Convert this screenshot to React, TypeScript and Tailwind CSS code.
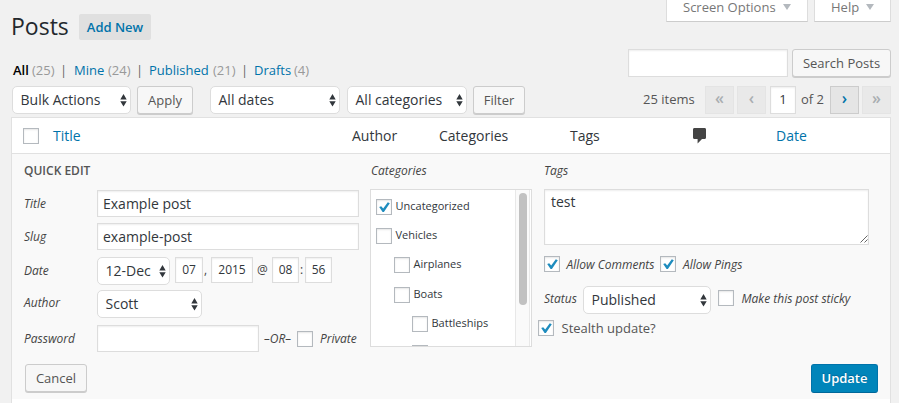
import type { ReactNode } from "react";
import { clsx } from "clsx";

function Arrows({ className }: { className?: string }) {
  return (
    <svg className={clsx("shrink-0", className)} width="7" height="13" viewBox="0 0 7 13" fill="#32373c">
      <path d="M3.5 0 6.700 5.400H.3zM3.500 12.600.3 7.200h6.400z" />
    </svg>
  );
}

function Select({ children, className }: { children: ReactNode; className?: string }) {
  return (
    <div className={clsx("flex h-7 shrink-0 items-center justify-between rounded-[5px] border border-[#ddd] bg-white pr-[3px] pl-[7.5px] text-sm text-[#32373c]", className)}>
      <span className="whitespace-nowrap">{children}</span>
      <Arrows />
    </div>
  );
}

function Button({ children, className }: { children: ReactNode; className?: string }) {
  return (
    <button className={clsx("flex h-7 shrink-0 items-center justify-center rounded-[3px] border border-[#ccc] bg-[#f7f7f7] pt-px text-[13px] whitespace-nowrap text-[#555] shadow-[0_1px_0_#ccc]", className)}>
      {children}
    </button>
  );
}

function Check({ on, className }: { on?: boolean; className?: string }) {
  return (
    <span className={clsx("flex size-4 shrink-0 items-center justify-center border border-[#b4b9be] bg-white shadow-[inset_0_1px_2px_rgba(0,0,0,0.1)]", className)}>
      {on && (
        <svg width="14" height="14" viewBox="0 0 14 14" fill="#1e8cbe" className="shrink-0">
          <path d="M2.2 7.1 4.200 6.200 6.200 8.600 10.800 2.300 12.800 3.300 6.900 11.900 5.600 11.900z" />
        </svg>
      )}
    </span>
  );
}

function Field({ children, className }: { children?: ReactNode; className?: string }) {
  return (
    <div className={clsx("flex shrink-0 items-center border border-[#ddd] bg-white text-[#32373c] shadow-[inset_0_1px_2px_rgba(0,0,0,0.07)]", className)}>
      {children}
    </div>
  );
}

function Label({ children, className }: { children: ReactNode; className?: string }) {
  return <span className={clsx("shrink-0 text-xs whitespace-nowrap text-[#444] italic", className)}>{children}</span>;
}

function ScreenTab({ label, className, labelClass }: { label: string; className: string; labelClass: string }) {
  return (
    <div className={clsx("flex h-[22px] items-start border border-t-0 border-[#ddd] border-b-[#ccc] bg-white pl-4 text-[13px] text-[#777]", className)}>
      <span className={clsx("-mt-[2px] shrink-0 leading-[18px] whitespace-nowrap", labelClass)}>{label}</span>
      <svg className="mt-1 shrink-0" width="8" height="6" viewBox="0 0 8 6" fill="#b4b9be"><path d="M0 0h8L4 6z" /></svg>
    </div>
  );
}

function View({ label, count, labelClass, countClass, barClass }: { label: string; count: string; labelClass: string; countClass: string; barClass?: string }) {
  return (
    <>
      <span className={clsx("shrink-0", labelClass)}>{label}</span>
      <span className={clsx("shrink-0 text-[#999]", countClass)}>{count}</span>
      {barClass && <span className={clsx("shrink-0 text-[#666]", barClass)}>|</span>}
    </>
  );
}

function PageButton({ children, active, className }: { children: ReactNode; active?: boolean; className?: string }) {
  return (
    <span className={clsx("flex h-7 w-[29px] shrink-0 items-center justify-center border pb-[4px] text-base font-semibold", active ? "border-[#ccc] bg-[#e5e5e5] text-[#0073aa]" : "border-[#e4e4e4] bg-[#e9e9e9] text-[#a9aeb1]", className)}>
      {children}
    </span>
  );
}

const categories = [
  { name: "Uncategorized", checked: true, row: "mt-[9px] ml-[5px]" },
  { name: "Vehicles", row: "mt-[13px] ml-[5px]" },
  { name: "Airplanes", row: "mt-[13px] ml-[23px]" },
  { name: "Boats", row: "mt-[14px] ml-[23px]" },
  { name: "Battleships", row: "mt-[13px] ml-[41px]" },
  { name: "", row: "mt-[13px] ml-[41px]" },
];

export default function App() {
  return (
    <div className="h-[403px] w-[899px] overflow-hidden bg-[#f1f1f1] font-['Open_Sans','Noto_Sans',sans-serif] text-[13px] text-[#444]">
      <header className="flex h-[49px] items-start pl-[11px]">
        <h1 className="mt-[11px] w-[68px] text-[23px] leading-[31px] text-[#23282d]">Posts</h1>
        <a className="mt-[14px] flex h-[26px] w-[72px] items-center justify-center rounded-[2px] bg-[#e0e0e0] pt-px text-[13px] font-semibold text-[#0073aa]">Add New</a>
        <ScreenTab label="Screen Options" className="ml-[515px] w-[142px]" labelClass="w-[100px]" />
        <ScreenTab label="Help" className="ml-[6px] w-[77px]" labelClass="w-[35px]" />
      </header>

      <div className="flex h-[37px] items-start pl-[13px]">
        <nav className="mt-[11px] flex w-[615px] leading-5 whitespace-nowrap text-[#0073aa]">
          <View label="All" count="(25)" labelClass="w-[19px] font-semibold text-black" countClass="w-[28px]" barClass="w-[14px]" />
          <View label="Mine" count="(24)" labelClass="w-[34px]" countClass="w-[28px]" barClass="w-[13px]" />
          <View label="Published" count="(21)" labelClass="w-[64px]" countClass="w-[28px]" barClass="w-[13px]" />
          <View label="Drafts" count="(4)" labelClass="w-[40px]" countClass="w-[20px]" />
        </nav>
        <Field className="h-7 w-[160px]" />
        <Button className="ml-1 w-[99px]">Search Posts</Button>
      </div>

      <div className="flex h-[31px] items-start pl-3">
        <Select className="w-[119px]">Bulk Actions</Select>
        <Button className="ml-[6px] w-[56px]">Apply</Button>
        <Select className="ml-[17px] w-[130px]">All dates</Select>
        <Select className="ml-[7px] w-[120px]">All categories</Select>
        <Button className="ml-[6px] w-[52px]">Filter</Button>
        <span className="ml-[118px] w-[62px] shrink-0 leading-[27px] text-[#555]">25 items</span>
        <PageButton>«</PageButton>
        <PageButton className="ml-[3px]">‹</PageButton>
        <Field className="ml-1 h-7 w-[26px] justify-center text-[13px]">1</Field>
        <span className="ml-[5px] w-[29px] shrink-0 leading-[27px] text-[#555]">of 2</span>
        <PageButton active>›</PageButton>
        <PageButton className="ml-[3px]">»</PageButton>
      </div>

      <main className="ml-[11px] h-[290px] w-[880px] border border-[#e1e1e1] bg-white">
        <div className="flex h-[35px] items-center pl-[11px] text-sm text-[#32373c]">
          <Check />
          <span className="ml-[14px] w-[299px] text-[#0073aa]">Title</span>
          <span className="w-[87px]">Author</span>
          <span className="w-[131px]">Categories</span>
          <span className="w-[123px]">Tags</span>
          <svg width="13" height="16" viewBox="0 0 13 16" fill="#444" className="mt-px shrink-0"><path d="M1.5 0h10C12.5 0 13 .6 13 1.500v8c0 .9-.5 1.500-1.500 1.500H9L4.600 15.500V11H1.500C.5 11 0 10.400 0 9.500v-8C0 .6.5 0 1.500 0z" /></svg>
          <span className="ml-[70px] text-[#0073aa]">Date</span>
        </div>

        <section className="h-[246px] border-t border-[#e1e1e1] bg-[#f9f9f9]">
          <div className="flex h-[210px]">
            <div className="w-[358px] shrink-0 pl-3">
              <h2 className="mt-[8px] h-[28px] text-xs leading-[18px] font-semibold text-[#555]">QUICK EDIT</h2>
              <div className="flex h-[33px] items-start">
                <Label className="w-[73px] leading-[27px]">Title</Label>
                <Field className="h-[27px] w-[262px] pl-[5px] text-sm">Example post</Field>
              </div>
              <div className="flex h-[34px] items-start">
                <Label className="w-[73px] leading-[27px]">Slug</Label>
                <Field className="h-[27px] w-[262px] pl-[5px] text-sm">example-post</Field>
              </div>
              <div className="flex h-[33px] items-start">
                <Label className="w-[73px] leading-[27px]">Date</Label>
                <Select className="w-[73px]">12-Dec</Select>
                <Field className="ml-[5px] h-[26px] w-[28px] justify-center text-xs">07</Field>
                <span className="w-[8px] pl-px text-xs leading-[26px]">,</span>
                <Field className="h-[26px] w-[42px] justify-center text-xs">2015</Field>
                <span className="w-[19px] pl-[4px] text-xs leading-[26px]">@</span>
                <Field className="h-[26px] w-[27px] justify-center text-xs">08</Field>
                <span className="w-[6px] pl-px text-xs leading-[26px]">:</span>
                <Field className="h-[26px] w-[27px] justify-center text-xs">56</Field>
              </div>
              <div className="flex h-[35px] items-start">
                <Label className="w-[73px] leading-[25px]">Author</Label>
                <Select className="w-[105px]">Scott</Select>
              </div>
              <div className="flex h-[27px] items-center">
                <Label className="w-[73px]">Password</Label>
                <Field className="h-[27px] w-[162px]" />
                <Label className="ml-[5px] w-[33px]">–OR–</Label>
                <Check />
                <Label className="ml-[7px]">Private</Label>
              </div>
            </div>

            <div className="w-[162px] shrink-0">
              <Label className="mt-[7px] block h-[28px] pl-px leading-[20px]">Categories</Label>
              <div className="flex h-[158px] overflow-hidden border border-[#ddd] bg-white">
                <ul className="w-[144px] shrink-0">
                  {categories.map((c, i) => (
                    <li key={i} className={clsx("flex h-4 items-start text-[11px] leading-[14px] text-[#32373c]", c.row)}>
                      <Check on={c.checked} />
                      <span className="ml-[3.5px]">{c.name}</span>
                    </li>
                  ))}
                </ul>
                <div className="w-[15px] shrink-0 border-x border-[#e8e8e8] bg-[#fafafa] pt-[3px] pl-[3px]">
                  <div className="h-[112px] w-2 rounded-full bg-[#c1c1c1]" />
                </div>
              </div>
            </div>

            <div className="ml-[12px] w-[325px] shrink-0">
              <Label className="mt-[7px] block h-[28px] leading-[20px]">Tags</Label>
              <Field className="h-[56px] justify-between pl-[6px] text-sm">
                <span className="self-start leading-[24px]">test</span>
                <svg width="8" height="8" viewBox="0 0 8 8" className="mb-px self-end" stroke="#666" strokeWidth="1"><path d="M.5 7.500l7-7M4.500 7.500l3-3" /></svg>
              </Field>
              <div className="mt-[11px] flex h-4 items-center">
                <Check on />
                <Label className="ml-[6.5px] w-[93.5px] pt-px">Allow Comments</Label>
                <Check on />
                <Label className="ml-[7px] pt-px">Allow Pings</Label>
              </div>
              <div className="mt-[14px] flex h-7 items-start">
                <Label className="w-[39px] leading-[25px]">Status</Label>
                <Select className="w-[128px]">Published</Select>
                <Check className="mt-1 ml-[7px]" />
                <Label className="ml-[7.5px] leading-[25px]">Make this post sticky</Label>
              </div>
              <div className="-ml-[6px] mt-[6px] flex h-4 items-center">
                <Check on />
                <span className="ml-[7.5px] pt-px whitespace-nowrap text-[#555]">Stealth update?</span>
              </div>
            </div>
          </div>
          <div className="flex justify-between pr-[12px] pl-[13px]">
            <Button className="w-[62px]">Cancel</Button>
            <button className="flex h-[29px] w-[67px] items-center justify-center rounded-[3px] border border-[#0073aa] border-b-[#006799] bg-[#0085ba] text-[13px] font-semibold text-white [text-shadow:0_-1px_1px_#006799]">Update</button>
          </div>
        </section>
      </main>
    </div>
  );
}
